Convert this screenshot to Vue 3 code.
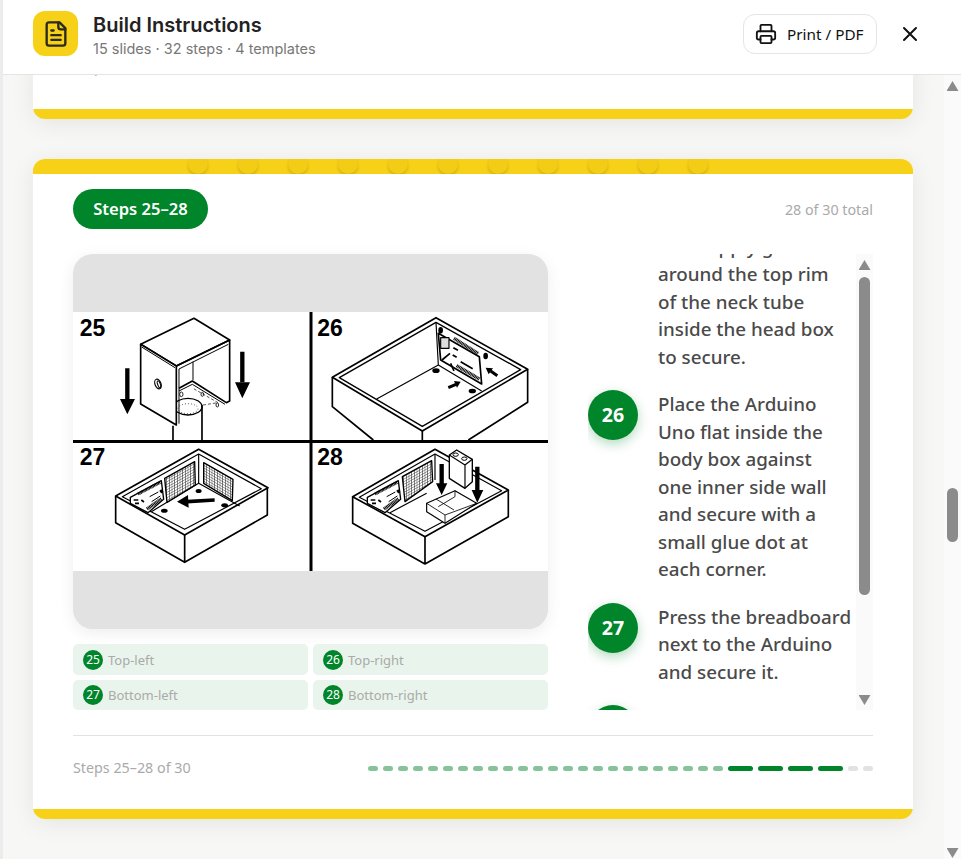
<template>
  <div class="modal">
    <header class="topbar">
      <div class="logo">
        <svg width="28" height="28" viewBox="0 0 24 24" fill="none" stroke="#2b2a1c" stroke-width="2" stroke-linecap="round" stroke-linejoin="round">
          <path d="M15 2H6a2 2 0 0 0-2 2v16a2 2 0 0 0 2 2h12a2 2 0 0 0 2-2V7z" />
          <path d="M14 2v4a2 2 0 0 0 2 2h4" />
          <path d="M8 9h2M8 13h8M8 17h8" />
        </svg>
      </div>
      <div class="heading">
        <h1>Build Instructions</h1>
        <p>15 slides · 32 steps · 4 templates</p>
      </div>
      <button class="print">
        <svg width="22" height="22" viewBox="0 0 24 24" fill="none" stroke="#111" stroke-width="2" stroke-linecap="round" stroke-linejoin="round">
          <path d="M6 18H4a2 2 0 0 1-2-2v-5a2 2 0 0 1 2-2h16a2 2 0 0 1 2 2v5a2 2 0 0 1-2 2h-2" />
          <path d="M6 9V3a1 1 0 0 1 1-1h10a1 1 0 0 1 1 1v6" />
          <rect x="6" y="14" width="12" height="8" rx="1" />
        </svg>
        <span>Print / PDF</span>
      </button>
      <button class="close">
        <svg width="24" height="24" viewBox="0 0 24 24" fill="none" stroke="#111" stroke-width="2" stroke-linecap="round" stroke-linejoin="round">
          <path d="M18 6 6 18M6 6l12 12" />
        </svg>
      </button>
    </header>

    <div class="main">
      <div class="pages">
        <section class="card card-prev">
          <div class="card-foot">
            <span class="foot-label">Steps 21–24 of 30</span>
          </div>
          <div class="yellow-bottom"></div>
        </section>

        <section class="card">
          <div class="yellow-top">
            <span v-for="n in 11" :key="n" class="stud"></span>
          </div>
          <div class="card-body">
            <div class="card-head">
              <span class="pill">Steps 25–28</span>
              <span class="total">28 of 30 total</span>
            </div>

            <div class="columns">
              <div class="left">
                <div class="figure">
                  <svg class="drawing" width="475" height="259" viewBox="0 0 475 259" fill="none" stroke="#000" stroke-linejoin="round">
                    <defs>
                      <pattern id="hatch-l" width="8" height="8" patternUnits="userSpaceOnUse" patternTransform="skewY(-29)">
                        <rect width="8" height="8" fill="#fff" stroke="none" />
                        <path d="M0 0H8M0 0V8" stroke="#222" stroke-width="3" />
                      </pattern>
                      <pattern id="hatch-r" width="8" height="8" patternUnits="userSpaceOnUse" patternTransform="skewY(30)">
                        <rect width="8" height="8" fill="#fff" stroke="none" />
                        <path d="M0 0H8M0 0V8" stroke="#222" stroke-width="3" />
                      </pattern>
                      <g id="board">
                        <path d="M172 172 265 122 272 178 225 218 172 190Z" fill="#fff" stroke-width="4" />
                        <path d="M195 162 262 127" stroke-width="9" stroke-dasharray="3 1.5" />
                        <path d="M222 207 266 176" stroke-width="10" stroke-dasharray="3 1.5" />
                        <path d="M182 180h14M186 190h12M205 180l8 6" stroke-width="5" />
                        <path d="M230 170 256 156M236 185 262 168" stroke-width="3" />
                        <path d="M262 150 268 158" stroke-width="8" />
                      </g>
                    </defs>

                    <!-- 25: head box over the neck tube -->
                    <g transform="translate(0,-7) scale(.3333)" stroke-width="5">
                      <path d="M300 362V405M387 300V405" />
                      <ellipse cx="345" cy="305" rx="42" ry="25" stroke-width="4" />
                      <ellipse cx="345" cy="311" rx="30" ry="15" stroke-width="2" stroke-dasharray="3 6" />
                      <path d="M237 295 310 258M237 295 310 340M390 300 435 293 360 250" stroke-width="2" stroke-dasharray="9 6" />
                      <ellipse cx="276" cy="290" rx="4" ry="6" stroke-width="2.5" />
                      <ellipse cx="325" cy="268" rx="5" ry="7" stroke-width="2.5" />
                      <ellipse cx="388" cy="268" rx="4" ry="6" stroke-width="2.5" />
                      <ellipse cx="433" cy="300" rx="4" ry="6" stroke-width="2.5" />
                      <path d="M203 118 363 40 470 105 310 183Z" fill="#fff" />
                      <path d="M203 118 310 183V360L203 297Z" fill="#fff" />
                      <path d="M206 126 306 188" stroke-width="3" />
                      <path d="M310 183 470 105V288L460 293 358 228 318 250" />
                      <path d="M318 192 466 118M360 170V225M318 258 358 238 456 298" stroke-width="3" />
                      <path d="M318 192V356" stroke-width="3" />
                      <ellipse cx="255" cy="237" rx="9" ry="15" transform="rotate(-20 255 237)" stroke-width="3.5" />
                      <ellipse cx="258" cy="238" rx="4" ry="11" transform="rotate(-20 258 238)" stroke-width="3" />
                      <path d="M163 190V285M508 140V232" stroke-width="13" />
                      <path d="M141 282H186L163 328ZM486 232H531L508 280Z" fill="#000" stroke="none" />
                      <text class="num" x="20" y="92">25</text>
                    </g>

                    <!-- 26: arduino in the body box -->
                    <g transform="translate(237,-7) scale(.3333)" stroke-width="5">
                      <path d="M67 217 378 38 653 193 337 378Z" fill="#fff" />
                      <path d="M67 217V305L190 405M653 193V292L475 405M337 378V405" />
                      <path d="M88 218 378 52 632 194 337 364Z" stroke-width="4" />
                      <path d="M378 52 385 180M200 282 385 180 515 258" stroke-width="3.5" />
                      <path d="M385 85 508 155 515 237 392 165Z" stroke-width="5" fill="#fff" />
                      <path d="M392 98H417V130H392Z" fill="#ddd" stroke-width="3.5" />
                      <path d="M432 100 505 146" stroke-width="10" stroke-dasharray="3 1.5" />
                      <path d="M440 182 508 222" stroke-width="10" stroke-dasharray="3 1.5" />
                      <path d="M396 165 420 145M422 175 432 198M430 128l14 8M428 150l12 7M452 170l36 21" stroke-width="5" />
                      <ellipse cx="378" cy="197" rx="11" ry="7" fill="#000" stroke="none" />
                      <ellipse cx="487" cy="258" rx="11" ry="7" fill="#000" stroke="none" />
                      <ellipse cx="392" cy="76" rx="7" ry="10" fill="#000" stroke="none" />
                      <ellipse cx="527" cy="153" rx="7" ry="10" fill="#000" stroke="none" />
                      <path d="M415 248 438 238" stroke-width="9" />
                      <path d="M432 228 452 230 441 248Z" fill="#000" stroke="none" />
                      <path d="M562 212 542 198" stroke-width="9" />
                      <path d="M527 188 549 190 536 208Z" fill="#000" stroke="none" />
                      <text class="num" x="22" y="92">26</text>
                    </g>

                    <!-- 27: breadboard next to the arduino -->
                    <g transform="translate(0,128) scale(.3333)" stroke-width="5">
                      <path d="M128 168 377 28 585 143 335 285Z" fill="#fff" />
                      <path d="M128 168V248L335 367 583 225V143M335 285V367" />
                      <path d="M148 170 377 42 565 146 335 268Z" stroke-width="3.5" />
                      <path d="M377 42V130L235 215M377 130 500 198" stroke-width="3.5" />
                      <use href="#board" />
                      <path d="M275 115 365 65 367 135 282 187Z" fill="url(#hatch-l)" stroke-width="4" />
                      <path d="M392 68 480 118 478 182 392 130Z" fill="url(#hatch-r)" stroke-width="4" />
                      <ellipse cx="377" cy="153" rx="9" ry="6" fill="#000" stroke="none" />
                      <ellipse cx="274" cy="212" rx="10" ry="6" fill="#000" stroke="none" />
                      <ellipse cx="455" cy="196" rx="10" ry="6" fill="#000" stroke="none" />
                      <path d="M425 180 342 185" stroke-width="11" />
                      <path d="M345 165 312 185 347 203Z" fill="#000" stroke="none" />
                      <text class="num" x="20" y="74">27</text>
                    </g>

                    <!-- 28: battery and holder -->
                    <g transform="translate(237,128) scale(.3333)" stroke-width="5">
                      <path d="M128 170 375 28 595 150 345 290Z" fill="#fff" />
                      <path d="M128 170V250L345 372 595 230V150M345 290V372" />
                      <path d="M148 172 375 42 575 152 345 274Z" stroke-width="3.5" />
                      <path d="M375 42V120M240 218 350 160" stroke-width="3.5" />
                      <use href="#board" />
                      <path d="M277 110 365 62 368 125 285 185Z" fill="url(#hatch-l)" stroke-width="4" />
                      <path d="M350 190 435 152 500 190 405 250 350 215Z" fill="#fff" stroke-width="3.5" />
                      <path d="M350 190 405 225V250M405 225 500 190M378 177 432 210M435 152V170L385 200" stroke-width="2.5" />
                      <path d="M418 45 440 30 487 58V125L465 145 418 115Z" fill="#fff" stroke-width="4" />
                      <path d="M418 45 465 75V145M465 75 487 58" stroke-width="3.5" />
                      <ellipse cx="437" cy="44" rx="8" ry="5" stroke-width="3" />
                      <ellipse cx="463" cy="56" rx="8" ry="5" stroke-width="3" />
                      <path d="M395 72V132M502 80V152" stroke-width="13" />
                      <path d="M378 130H412L395 165ZM485 150H520L502 188Z" fill="#000" stroke="none" />
                      <text class="num" x="22" y="74">28</text>
                    </g>

                    <path d="M0 129.5H475M238 0V259" stroke-width="3" />
                  </svg>
                </div>
                <div class="legend">
                  <div v-for="item in legend" :key="item.n" class="legend-item">
                    <span class="legend-num">{{ item.n }}</span>
                    <span>{{ item.label }}</span>
                  </div>
                </div>
              </div>

              <div class="right">
                <div ref="scroller" class="steps">
                  <div v-for="step in steps" :key="step.n" :ref="el => setStep(step.n, el)" class="step">
                    <span class="step-num">{{ step.n }}</span>
                    <p>{{ step.text }}</p>
                  </div>
                </div>
                <div class="track">
                  <span class="arrow up"></span>
                  <span class="thumb thumb-inner"></span>
                  <span class="arrow down"></span>
                </div>
              </div>
            </div>

            <div class="card-foot">
              <span class="foot-label">Steps 25–28 of 30</span>
              <div class="progress">
                <span v-for="seg in segments" :key="seg" class="seg" :class="segClass(seg)"></span>
              </div>
            </div>
          </div>
          <div class="yellow-bottom"></div>
        </section>
      </div>

      <div class="track track-page">
        <span class="arrow up"></span>
        <span class="thumb thumb-page"></span>
        <span class="arrow down"></span>
      </div>
    </div>
  </div>
</template>

<script setup>
import { onMounted, ref } from 'vue'

const legend = [
  { n: 25, label: 'Top-left' },
  { n: 26, label: 'Top-right' },
  { n: 27, label: 'Bottom-left' },
  { n: 28, label: 'Bottom-right' }
]

// line breaks are kept as they fall on the slide
const steps = [
  { n: 25, text: 'Slide the head box\ndown over the\nneck tube.\nThen apply glue\naround the top rim\nof the neck tube\ninside the head box\nto secure.' },
  { n: 26, text: 'Place the Arduino\nUno flat inside the\nbody box against\none inner side wall\nand secure with a\nsmall glue dot at\neach corner.' },
  { n: 27, text: 'Press the breadboard\nnext to the Arduino\nand secure it.' },
  { n: 28, text: 'Set the battery\nholder on the floor\nof the box.' }
]

const segments = Array.from({ length: 30 }, (_, i) => i + 1)

const segClass = (seg) => {
  if (seg < 25) return 'done'
  if (seg <= 28) return 'active'
  return ''
}

const scroller = ref(null)
const stepEls = {}
const setStep = (n, el) => {
  stepEls[n] = el
}

onMounted(() => {
  scroller.value.scrollTop = stepEls[26].offsetTop - 136
})
</script>

<style>
html,
body {
  margin: 0;
  overflow: hidden;
}
</style>

<style scoped>
.modal {
  width: 961px;
  height: 859px;
  padding-left: 3px;
  box-sizing: border-box;
  background: #ececec;
  display: flex;
  flex-direction: column;
  overflow: hidden;
  font-family: "Noto Sans", "Liberation Sans", sans-serif;
}

.topbar {
  position: relative;
  z-index: 2;
  flex: none;
  height: 75px;
  box-sizing: border-box;
  padding: 0 39px 7px 30px;
  background: #fff;
  border-bottom: 1px solid #e4e4e4;
  display: flex;
  align-items: center;
}

.logo {
  width: 45px;
  height: 45px;
  border-radius: 12px;
  background: #f7d117;
  display: flex;
  align-items: center;
  justify-content: center;
}

.heading {
  margin-left: 15px;
  padding-top: 3px;
  flex: 1;
}

.heading h1 {
  margin: 0;
  font-family: Inter, sans-serif;
  font-size: 20px;
  line-height: 26px;
  font-weight: 600;
  color: #222;
}

.heading p {
  margin: 0;
  font-family: Inter, sans-serif;
  font-size: 14.5px;
  line-height: 21px;
  color: #777;
}

.print {
  width: 134px;
  height: 40px;
  box-sizing: border-box;
  padding: 0 0 0 11px;
  border: 1px solid #e4e4e4;
  border-radius: 12px;
  background: #fff;
  display: flex;
  align-items: center;
  gap: 10px;
  font-family: "Noto Sans", sans-serif;
  font-size: 15.3px;
  font-weight: 400;
  color: #111;
}

.close {
  width: 24px;
  height: 24px;
  padding: 0;
  margin-left: 21px;
  border: 0;
  background: none;
}

.main {
  flex: 1;
  min-height: 0;
  display: flex;
  background: #f7f7f5;
}

.pages {
  flex: 1;
  min-width: 0;
  padding: 0 31px 0 30px;
  overflow: hidden;
}

.card {
  background: #fff;
  border-radius: 12px;
  box-shadow: 0 4px 24px rgba(0, 0, 0, 0.08);
  overflow: hidden;
  margin-bottom: 40px;
}

.card-prev {
  margin-top: -18px;
}

.card-prev .card-foot {
  border-top: 0;
  padding: 0 40px;
  height: 52px;
  align-items: flex-start;
}

.yellow-top {
  position: relative;
  height: 15px;
  background: #f7d117;
  display: flex;
  justify-content: flex-start;
  gap: 30px;
  padding-left: 155px;
  overflow: hidden;
}

.stud {
  flex: none;
  width: 20px;
  height: 20px;
  margin-top: -5px;
  border-radius: 50%;
  background: #f2cc15;
  box-shadow: 0 2px 3px rgba(0, 0, 0, 0.16);
}

.yellow-bottom {
  height: 10px;
  background: #f7d117;
}

.card-body {
  padding: 15px 40px 0;
}

.card-head {
  display: flex;
  align-items: center;
  justify-content: space-between;
  height: 40px;
  margin-bottom: 25px;
}

.pill {
  width: 135px;
  height: 40px;
  border-radius: 20px;
  background: #00852b;
  color: #fff;
  font-size: 16.6px;
  font-weight: 600;
  line-height: 40px;
  text-align: center;
}

.total {
  font-size: 14.3px;
  color: #aaa;
}

.columns {
  display: flex;
  gap: 40px;
  height: 456px;
  margin-bottom: 25px;
}

.left {
  width: 475px;
  flex: none;
}

.figure {
  height: 375px;
  border-radius: 20px;
  background: #e2e2e2;
  box-shadow: 0 4px 16px rgba(0, 0, 0, 0.07);
  display: flex;
  align-items: center;
  overflow: hidden;
}

.drawing {
  display: block;
  background: #fff;
}

.num {
  font-family: "Liberation Sans", Arial, sans-serif;
  font-size: 69px;
  font-weight: 700;
  fill: #000;
  stroke: none;
}

.legend {
  margin-top: 15px;
  display: grid;
  grid-template-columns: 235px 235px;
  gap: 5px;
}

.legend-item {
  height: 31px;
  box-sizing: border-box;
  padding-left: 10px;
  border-radius: 5px;
  background: #e9f4ec;
  display: flex;
  align-items: center;
  gap: 5px;
  font-size: 13px;
  color: #aaa;
}

.legend-item:nth-child(n + 3) {
  height: 30px;
}

.legend-num {
  width: 20px;
  height: 20px;
  border-radius: 50%;
  background: #00852b;
  color: #fff;
  font-size: 12px;
  line-height: 20px;
  text-align: center;
}

.right {
  flex: 1;
  min-width: 0;
  display: flex;
}

.steps {
  flex: 1;
  min-width: 0;
  overflow: hidden;
  position: relative;
}

.step {
  display: flex;
  gap: 20px;
  margin-bottom: 19px;
}

.step-num {
  flex: none;
  width: 50px;
  height: 50px;
  border-radius: 50%;
  background: #00852b;
  box-shadow: 0 4px 12px rgba(0, 133, 43, 0.3);
  color: #fff;
  font-size: 19.5px;
  font-weight: 700;
  line-height: 50px;
  text-align: center;
}

.step p {
  margin: 0;
  padding-top: 1px;
  font-size: 18.8px;
  font-weight: 500;
  line-height: 27.5px;
  color: #4a4a4a;
  white-space: pre-line;
}

.track {
  flex: none;
  width: 17px;
  background: #fafafa;
  display: flex;
  flex-direction: column;
  align-items: center;
}

.arrow {
  flex: none;
  width: 12px;
  height: 10px;
  background: #8b8b8b;
}

.arrow.up {
  clip-path: polygon(50% 0, 100% 100%, 0 100%);
}

.arrow.down {
  clip-path: polygon(0 0, 100% 0, 50% 100%);
  margin-top: auto;
}

.thumb {
  flex: none;
  width: 11px;
  border-radius: 6px;
  background: #8b8b8b;
}

.right .arrow.up {
  margin-top: 6px;
}

.right .arrow.down {
  margin-bottom: 5px;
}

.thumb-inner {
  height: 318px;
  margin-top: 7px;
}

.track-page .arrow.up {
  margin-top: 6px;
}

.track-page .arrow.down {
  margin-bottom: 1px;
}

.thumb-page {
  height: 54px;
  margin-top: 397px;
}

.card-foot {
  height: 74px;
  box-sizing: border-box;
  border-top: 1px solid #e2e2e2;
  display: flex;
  align-items: center;
  justify-content: space-between;
  padding-bottom: 9px;
}

.foot-label {
  font-size: 14.3px;
  line-height: 20px;
  color: #aaa;
}

.progress {
  display: flex;
  gap: 5px;
}

.seg {
  width: 10px;
  height: 5px;
  border-radius: 3px;
  background: #e2e2e2;
}

.seg.done {
  background: #85c49b;
}

.seg.active {
  width: 25px;
  background: #00852b;
}
</style>
